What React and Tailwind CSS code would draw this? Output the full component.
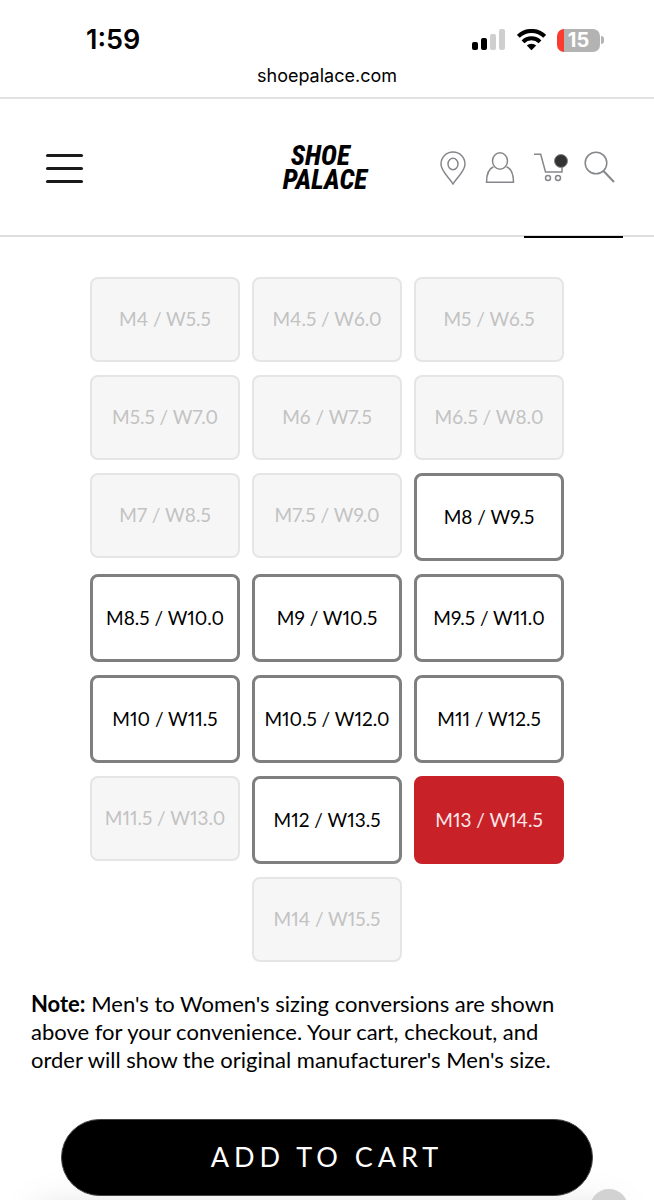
import { useState } from "react";

const sizes = [
  { label: "M4 / W5.5", soldOut: true },
  { label: "M4.5 / W6.0", soldOut: true },
  { label: "M5 / W6.5", soldOut: true },
  { label: "M5.5 / W7.0", soldOut: true },
  { label: "M6 / W7.5", soldOut: true },
  { label: "M6.5 / W8.0", soldOut: true },
  { label: "M7 / W8.5", soldOut: true },
  { label: "M7.5 / W9.0", soldOut: true },
  { label: "M8 / W9.5" },
  { label: "M8.5 / W10.0" },
  { label: "M9 / W10.5" },
  { label: "M9.5 / W11.0" },
  { label: "M10 / W11.5" },
  { label: "M10.5 / W12.0" },
  { label: "M11 / W12.5" },
  { label: "M11.5 / W13.0", soldOut: true },
  { label: "M12 / W13.5" },
  { label: "M13 / W14.5" },
  { label: "M14 / W15.5", soldOut: true },
];

function StatusBar() {
  return (
    <div className="flex items-center justify-between pl-[86px] pr-[50px] pt-6 font-[Inter,sans-serif]">
      <span className="text-[27px] leading-8 font-semibold">1:59</span>
      <div className="flex items-center gap-[11px]">
        <svg width="34" height="22" viewBox="0 0 34 22" aria-label="Signal">
          <rect x="0" y="13" width="6" height="8" rx="2" fill="#000" />
          <rect x="9" y="9" width="6" height="12" rx="2" fill="#000" />
          <rect x="18" y="5" width="6" height="16" rx="2" fill="#cfcfcf" />
          <rect x="27" y="0" width="6" height="21" rx="2" fill="#cfcfcf" />
        </svg>
        <svg width="29" height="22" viewBox="0 0 29 22" fill="none" stroke="#000" strokeWidth="4" aria-label="Wi-Fi">
          <path d="M1.3 7.4 A18.6 18.6 0 0 1 27.7 7.4" />
          <path d="M6 12.8 A12 12 0 0 1 23 12.8" />
          <path d="M14.5 21.3 L9.8 16.6 A6.6 6.6 0 0 1 19.2 16.6 Z" fill="#000" stroke="none" />
        </svg>
        <div className="flex items-center gap-px">
          <div className="flex h-[23px] w-[43px] items-center justify-center rounded-[7px] bg-linear-to-r from-[#fb3b30] from-16% to-[#b3b3b3] to-16%">
            <span className="text-xl leading-5 font-bold text-white">15</span>
          </div>
          <span className="h-2 w-[3px] rounded-r-full bg-[#b3b3b3]" />
        </div>
      </div>
    </div>
  );
}

function Header() {
  return (
    <header className="relative grid h-[138px] grid-cols-[1fr_auto_1fr] items-center border-b-2 border-[#dedede] px-[39px] pt-0.5">
      <button aria-label="Menu" className="ml-[7px] flex w-[37px] flex-col gap-[10px]">
        <span className="h-[3px] rounded-full bg-[#1a1a1a]" />
        <span className="h-[3px] rounded-full bg-[#1a1a1a]" />
        <span className="h-[3px] rounded-full bg-[#1a1a1a]" />
      </button>
      <a
        href="#home"
        className="flex flex-col pr-1 font-['Roboto_Condensed','Liberation_Sans_Narrow',sans-serif] text-[27px] leading-6 font-extrabold text-black italic"
      >
        <span className="pl-2">SHOE</span>
        <span>PALACE</span>
      </a>
      <div className="flex items-center justify-end gap-[19px] text-[#85878a]">
        <button aria-label="Stores">
          <svg width="26" height="34" viewBox="0 0 26 34" fill="none" stroke="currentColor" strokeWidth="1.5">
            <path d="M13 33 C10 27.5 1 20.5 1 13 A12 12 0 0 1 25 13 C25 20.5 16 27.5 13 33 Z" />
            <ellipse cx="13" cy="13" rx="5" ry="5.7" />
          </svg>
        </button>
        <button aria-label="Account">
          <svg width="30" height="34" viewBox="0 0 30 34" fill="none" stroke="currentColor" strokeWidth="1.5">
            <ellipse cx="15" cy="10" rx="7.5" ry="8.3" />
            <path d="M8.5 15.7 C4 17.5 1.6 23 1.5 31.2 H28.5 C28.4 23 26 17.5 21.5 15.7" />
          </svg>
        </button>
        <button aria-label="Cart">
          <svg width="34" height="34" viewBox="0 0 34 34" fill="none" stroke="currentColor" strokeWidth="1.5">
            <path d="M0 3.3 H6.7 L11.5 21 H28 V14" />
            <circle cx="14" cy="27" r="2.5" />
            <circle cx="24" cy="27" r="2.5" />
            <circle cx="27" cy="10" r="6.5" fill="#333" strokeWidth="1" />
          </svg>
        </button>
        <button aria-label="Search" className="-ml-[3px]">
          <svg width="31" height="34" viewBox="0 0 31 34" fill="none" stroke="currentColor" strokeWidth="1.5">
            <circle cx="12" cy="12" r="10.8" />
            <path d="M19.5 20 L30 31" strokeWidth="2" />
          </svg>
        </button>
      </div>
      <span className="absolute right-[31px] -bottom-[3px] h-[2px] w-[99px] bg-black" />
    </header>
  );
}

function SizeButton({ size, selected, onSelect }) {
  const base = "w-[150px] rounded-lg text-center text-[19px] proportional-nums";

  if (size.soldOut) {
    return (
      <button disabled className={`${base} h-[85px] border-2 border-[#e5e5e5] bg-[#f6f6f6] text-[#c2c2c2]`}>
        {size.label}
      </button>
    );
  }

  return (
    <button
      onClick={onSelect}
      aria-pressed={selected}
      className={`${base} h-[88px] border-3 ${
        selected ? "border-[#c92128] bg-[#c92128] text-[#fbe9e9]" : "border-[#7f7f7f] bg-white text-black"
      }`}
    >
      {size.label}
    </button>
  );
}

export default function App() {
  const [selected, setSelected] = useState("M13 / W14.5");

  return (
    <div className="flex h-screen flex-col overflow-hidden bg-white font-[Lato,sans-serif] text-black">
      <div className="shrink-0 border-b-2 border-[#e2e2e2] pb-[9px]">
        <StatusBar />
        <p className="pt-2 text-center font-[Inter,sans-serif] text-lg leading-6">shoepalace.com</p>
      </div>

      <Header />

      <main className="flex flex-1 flex-col pt-10">
        <div className="mx-auto flex max-w-[480px] flex-wrap items-start justify-center gap-x-3 gap-y-[13px]">
          {sizes.map((size) => (
            <SizeButton
              key={size.label}
              size={size}
              selected={size.label === selected}
              onSelect={() => setSelected(size.label)}
            />
          ))}
        </div>

        <p className="mx-[31px] mt-7 max-w-[540px] text-[22px] leading-7">
          <strong>Note:</strong> Men's to Women's sizing conversions are shown above for your convenience. Your cart,
          checkout, and order will show the original manufacturer's Men's size.
        </p>

        <div className="relative mt-[45px] flex flex-1 flex-col px-[61px]">
          <div className="absolute inset-x-8 top-[84px] h-10 rounded-full bg-black/10 blur-lg" />
          <button className="relative h-[77px] rounded-full border border-[#444] bg-black text-[27px] tracking-[5px] text-white">
            ADD TO CART
          </button>
          <button
            aria-label="Scroll to top"
            className="absolute top-[70px] right-[26px] size-[38px] rounded-full bg-[#d2d2d2]"
          />
        </div>
      </main>
    </div>
  );
}
